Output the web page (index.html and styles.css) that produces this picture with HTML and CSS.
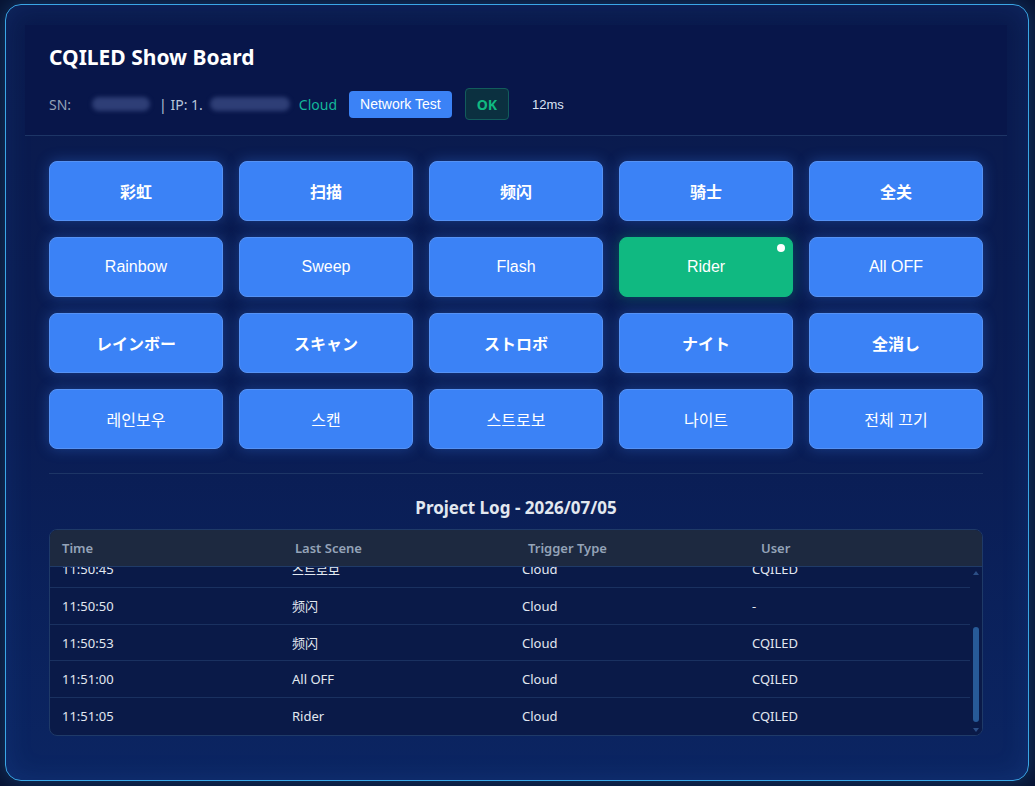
FILE: index.html
```html
<!DOCTYPE html>
<html lang="en">
<head>
    <meta charset="UTF-8">
    <meta name="viewport" content="width=device-width, initial-scale=1.0">
    <title>CQILED Show Board</title>
    <link rel="stylesheet" href="styles.css">
</head>
<body>
    <div class="panel">
        <!-- Header -->
        <div class="header">
            <h1>CQILED Show Board</h1>
            <div class="info-row">
                <span class="label">SN:</span>
                <span class="masked masked-sn"></span>
                <span class="label light">| IP: 1.</span>
                <span class="masked masked-ip"></span>
                <span class="cloud">Cloud</span>
                <button type="button" class="net-test">Network Test</button>
                <span class="status-ok">OK</span>
                <span class="latency">12ms</span>
            </div>
        </div>

        <div class="content">
            <!-- Scene Buttons -->
            <div class="scene-grid">
                <button type="button" class="scene bold">彩虹</button>
                <button type="button" class="scene bold">扫描</button>
                <button type="button" class="scene bold">频闪</button>
                <button type="button" class="scene bold">骑士</button>
                <button type="button" class="scene bold">全关</button>

                <button type="button" class="scene">Rainbow</button>
                <button type="button" class="scene">Sweep</button>
                <button type="button" class="scene">Flash</button>
                <button type="button" class="scene active">Rider</button>
                <button type="button" class="scene">All OFF</button>

                <button type="button" class="scene bold">レインボー</button>
                <button type="button" class="scene bold">スキャン</button>
                <button type="button" class="scene bold">ストロボ</button>
                <button type="button" class="scene bold">ナイト</button>
                <button type="button" class="scene bold">全消し</button>

                <button type="button" class="scene">레인보우</button>
                <button type="button" class="scene">스캔</button>
                <button type="button" class="scene">스트로보</button>
                <button type="button" class="scene">나이트</button>
                <button type="button" class="scene">전체 끄기</button>
            </div>

            <div class="divider"></div>

            <!-- Project Log -->
            <h2 class="log-title">Project Log - 2026/07/05</h2>
            <div class="log-table">
                <div class="log-head">
                    <span>Time</span>
                    <span>Last Scene</span>
                    <span>Trigger Type</span>
                    <span>User</span>
                </div>
                <div class="log-scroll">
                    <div class="log-body" id="log-body">
                        <div class="log-row"><span>11:50:30</span><span>彩虹</span><span>Cloud</span><span>CQILED</span></div>
                        <div class="log-row"><span>11:50:38</span><span>扫描</span><span>Cloud</span><span>CQILED</span></div>
                        <div class="log-row"><span>11:50:45</span><span>스트로보</span><span>Cloud</span><span>CQILED</span></div>
                        <div class="log-row"><span>11:50:50</span><span>频闪</span><span>Cloud</span><span>-</span></div>
                        <div class="log-row"><span>11:50:53</span><span>频闪</span><span>Cloud</span><span>CQILED</span></div>
                        <div class="log-row"><span>11:51:00</span><span>All OFF</span><span>Cloud</span><span>CQILED</span></div>
                        <div class="log-row"><span>11:51:05</span><span>Rider</span><span>Cloud</span><span>CQILED</span></div>
                    </div>
                    <!-- scroll rail -->
                    <div class="rail">
                        <span class="arrow up"></span>
                        <span class="thumb"></span>
                        <span class="arrow down"></span>
                    </div>
                </div>
            </div>
        </div>
    </div>

    <script>
        // Keep the latest log entries in view
        var logBody = document.getElementById('log-body');
        logBody.scrollTop = logBody.scrollHeight;
    </script>
</body>
</html>
```

FILE: styles.css
```css
/* General Styles */
body {
    margin: 0;
    padding: 4px 6px 5px 5px;
    height: 100vh;
    box-sizing: border-box;
    background-color: #081434;
    font-family: "Noto Sans", "Noto Sans CJK SC", sans-serif;
    color: #e2e8f0;
}

.panel {
    height: 100%;
    box-sizing: border-box;
    padding: 20px 21px 0 19px;
    border: 1px solid #3aa6e6;
    border-radius: 16px;
    background: linear-gradient(180deg, #0a1a4c 0%, #0a1d54 55%, #0b2562 100%);
    box-shadow: 0 0 18px rgba(56, 160, 248, 0.25), inset 0 0 28px rgba(56, 140, 248, 0.12);
}

/* Header */
.header {
    background-color: #08164a;
    padding: 16px 24px 0;
    height: 111px;
    box-sizing: border-box;
    border-bottom: 1px solid #1d3566;
}

.header h1 {
    margin: 0;
    font-size: 21px;
    line-height: 32px;
    font-weight: 700;
    color: #ffffff;
}

.info-row {
    display: flex;
    align-items: center;
    height: 32px;
    margin-top: 15px;
    font-size: 14px;
}

.label {
    color: #94a3b8;
}

.label.light {
    color: #b9c5da;
}

.masked {
    display: inline-block;
    height: 14px;
    border-radius: 7px;
    background-color: #2e3e76;
    filter: blur(2px);
}

.masked-sn {
    width: 58px;
    margin: 0 9px 0 21px;
}

.masked-ip {
    width: 80px;
    margin: 0 9px 0 7px;
}

.cloud {
    color: #14b89a;
    margin-right: 12px;
}

.net-test {
    height: 27px;
    padding: 0 11px;
    border: none;
    border-radius: 4px;
    background-color: #3b82f6;
    color: #ffffff;
    font-family: "Liberation Sans", sans-serif;
    font-size: 14px;
    cursor: pointer;
}

.status-ok {
    display: flex;
    align-items: center;
    height: 30px;
    padding: 0 11px;
    margin-left: 13px;
    border: 1px solid #125c5c;
    border-radius: 4px;
    background-color: #0b3040;
    color: #10b981;
    font-weight: 700;
    font-size: 14px;
}

.latency {
    margin-left: 23px;
    color: #dbe4f5;
    font-family: "Liberation Sans", sans-serif;
    font-size: 13px;
}

/* Scene Buttons */
.content {
    padding: 25px 24px 0;
}

.scene-grid {
    display: grid;
    grid-template-columns: repeat(5, 1fr);
    grid-auto-rows: 60px;
    column-gap: 16px;
    row-gap: 16px;
}

.scene {
    position: relative;
    border: 1px solid #5592f5;
    border-radius: 8px;
    background-color: #3b82f6;
    color: #ffffff;
    font-family: "Liberation Sans", "Noto Sans CJK SC", sans-serif;
    font-size: 16px;
    box-shadow: 0 0 14px rgba(59, 130, 246, 0.35);
    cursor: pointer;
}

.scene.bold {
    font-weight: 700;
}

.scene.active {
    background-color: #10b981;
    border-color: #10b981;
    box-shadow: 0 0 14px rgba(16, 185, 129, 0.35);
}

.scene.active::after {
    content: "";
    position: absolute;
    top: 6px;
    right: 7px;
    width: 8px;
    height: 8px;
    border-radius: 50%;
    background-color: #ffffff;
}

.divider {
    height: 1px;
    margin-top: 24px;
    background-color: #1d3566;
}

/* Project Log */
.log-title {
    margin: 22px 0 9px;
    text-align: center;
    font-size: 17px;
    line-height: 24px;
    font-weight: 700;
    color: #e2e8f0;
}

.log-table {
    border: 1px solid #1f3a68;
    border-radius: 8px;
    overflow: hidden;
    background-color: #0a1a48;
}

.log-head {
    display: grid;
    grid-template-columns: repeat(4, 1fr);
    height: 36px;
    align-items: center;
    background-color: #1d2940;
    border-bottom: 1px solid #1f3a68;
    font-size: 13px;
    font-weight: 600;
    color: #94a3b8;
}

.log-head span {
    padding-left: 12px;
}

.log-scroll {
    display: flex;
    height: 168px;
}

.log-body {
    flex: 1;
    overflow-y: auto;
    scrollbar-width: none;
}

.log-body::-webkit-scrollbar {
    display: none;
}

.log-row {
    display: grid;
    grid-template-columns: repeat(4, 1fr);
    align-items: center;
    height: 36.7px;
    box-sizing: border-box;
    border-bottom: 1px solid #1a3160;
    font-size: 13px;
    color: #e2e8f0;
}

.log-row span {
    padding-left: 12px;
}

.log-row:last-child {
    border-bottom: none;
}

/* Scroll rail */
.rail {
    width: 12px;
    display: flex;
    flex-direction: column;
    align-items: center;
    padding: 4px 0 3px;
    box-sizing: border-box;
    background-color: #0a1a48;
}

.arrow {
    width: 0;
    height: 0;
    border-left: 3px solid transparent;
    border-right: 3px solid transparent;
}

.arrow.up {
    border-bottom: 4px solid #2c4f86;
}

.arrow.down {
    border-top: 4px solid #2c4f86;
}

.thumb {
    width: 6px;
    height: 95px;
    margin: auto 0 6px;
    border-radius: 3px;
    background-color: #275a98;
}
```
